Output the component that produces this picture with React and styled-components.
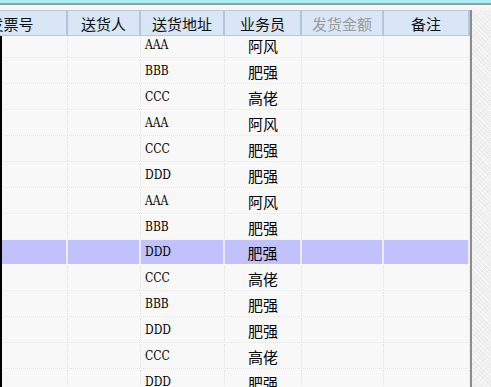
import React from 'react';
import styled, { createGlobalStyle } from 'styled-components';

const GlobalStyle = createGlobalStyle`
  html, body {
    margin: 0;
    padding: 0;
    width: 491px;
    height: 387px;
    overflow: hidden;
    background: #f0f0f0;
  }
`;

// column widths, the first one is partly scrolled out on the left
const columns = '112px 73px 84px 77px 82px 86px';
const scrollX = 44;
const rowHeight = 26;

const rows = [
  { addr: 'AAA', sales: '阿风' },
  { addr: 'BBB', sales: '肥强' },
  { addr: 'CCC', sales: '高佬' },
  { addr: 'AAA', sales: '阿风' },
  { addr: 'CCC', sales: '肥强' },
  { addr: 'DDD', sales: '肥强' },
  { addr: 'AAA', sales: '阿风' },
  { addr: 'BBB', sales: '肥强' },
  { addr: 'DDD', sales: '肥强', selected: true },
  { addr: 'CCC', sales: '高佬' },
  { addr: 'BBB', sales: '肥强' },
  { addr: 'DDD', sales: '肥强' },
  { addr: 'CCC', sales: '高佬' },
  { addr: 'DDD', sales: '肥强' },
];

const headers = [
  { label: '发票号' },
  { label: '送货人' },
  { label: '送货地址' },
  { label: '业务员' },
  { label: '发货金额', disabled: true },
  { label: '备注' },
];

const Frame = styled.div`
  width: 491px;
  height: 387px;
  display: flex;
  flex-direction: column;
  font-family: "Noto Sans CJK SC", "Noto Sans", sans-serif;
`;

const TitleEdge = styled.div`
  height: 3px;
  flex: none;
  background: #a9eef0;
  border-bottom: 2px solid #9a9a9a;
`;

const Gap = styled.div`
  height: 5px;
  flex: none;
  background: #f6f6f6;
`;

const Main = styled.div`
  flex: 1;
  display: flex;
  min-height: 0;
`;

const GridPanel = styled.div`
  width: 470px;
  flex: none;
  display: flex;
  flex-direction: column;
  background: #f8f8f8;
`;

const SidePanel = styled.div`
  flex: 1;
  border-left: 2px solid #8c8c8c;
  background-color: #efefef;
  background-image:
    repeating-linear-gradient(45deg, rgba(255,255,255,0.5) 0 1px, transparent 1px 3px),
    repeating-linear-gradient(-45deg, rgba(0,0,0,0.025) 0 1px, transparent 1px 4px);
`;

const HeaderViewport = styled.div`
  height: 26px;
  flex: none;
  overflow: hidden;
  position: relative;
  z-index: 1;
  background: #d9e6f5;
  border-top: 1px solid #b9c9dc;
  border-bottom: 1px solid #b9c9dc;
  box-sizing: border-box;
`;

const HeaderRow = styled.div`
  display: grid;
  grid-template-columns: ${columns};
  margin-left: -${scrollX}px;
  height: 100%;
`;

const HeaderCell = styled.div`
  display: flex;
  align-items: center;
  justify-content: center;
  border-right: 2px solid #b3c5da;
  font-size: 15px;
  color: ${p => (p.$disabled ? '#9a9a9a' : '#111')};
  white-space: nowrap;
  overflow: hidden;
`;

const BodyViewport = styled.div`
  flex: 1;
  overflow: hidden;
  border-left: 2px solid #000;
`;

const RowList = styled.div`
  margin-left: -${scrollX + 2}px;
  margin-top: -4px;
`;

const Row = styled.div`
  display: grid;
  grid-template-columns: ${columns};
  height: ${rowHeight}px;
  box-sizing: border-box;
  border-bottom: 1px dotted ${p => (p.$selected ? '#f4f4ff' : '#e6e6e6')};
  border-top: 1px solid ${p => (p.$selected ? '#f4f4ff' : 'transparent')};
  margin-top: ${p => (p.$selected ? '-1px' : '0')};
`;

const Cell = styled.div`
  display: flex;
  align-items: center;
  justify-content: ${p => (p.$center ? 'center' : 'flex-start')};
  padding-left: ${p => (p.$center ? '0' : '4px')};
  border-right: ${p => (p.$selected ? '2px solid #ececff' : '1px dotted #e2e2e2')};
  background: ${p => (p.$selected ? '#c1c1fe' : 'transparent')};
  overflow: hidden;
  white-space: nowrap;
`;

const Code = styled.span`
  font-family: "DejaVu Serif", "Liberation Serif", serif;
  font-stretch: condensed;
  font-size: 12px;
  color: #000;
`;

const Name = styled.span`
  font-size: 15px;
  color: #000;
`;

function GridRow({ row }) {
  const sel = row.selected;
  return (
    <Row $selected={sel}>
      <Cell $selected={sel} />
      <Cell $selected={sel} />
      <Cell $selected={sel}>
        <Code>{row.addr}</Code>
      </Cell>
      <Cell $selected={sel} $center>
        <Name>{row.sales}</Name>
      </Cell>
      <Cell $selected={sel} />
      <Cell $selected={sel} />
    </Row>
  );
}

export default function App() {
  return (
    <>
      <GlobalStyle />
      <Frame>
        <TitleEdge />
        <Gap />
        <Main>
          <GridPanel>
            <HeaderViewport>
              <HeaderRow>
                {headers.map(h => (
                  <HeaderCell key={h.label} $disabled={h.disabled}>
                    {h.label}
                  </HeaderCell>
                ))}
              </HeaderRow>
            </HeaderViewport>
            <BodyViewport>
              <RowList>
                {rows.map((r, i) => (
                  <GridRow key={i} row={r} />
                ))}
              </RowList>
            </BodyViewport>
          </GridPanel>
          <SidePanel />
        </Main>
      </Frame>
    </>
  );
}
